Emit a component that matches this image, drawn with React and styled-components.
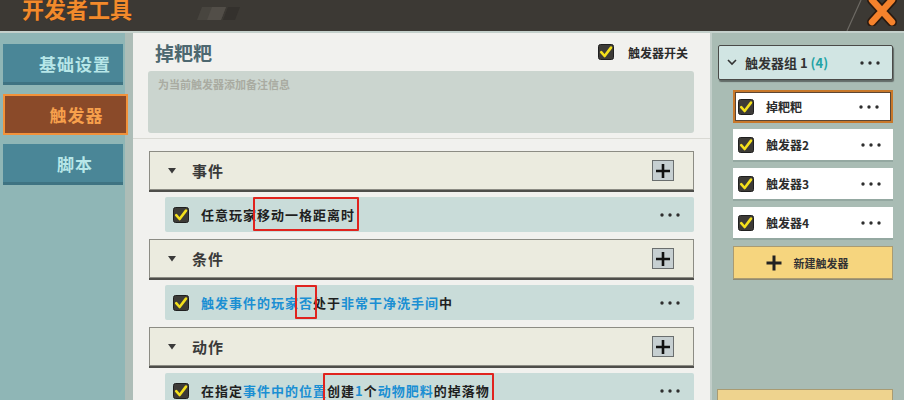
import React from "react";
import styled, { createGlobalStyle } from "styled-components";

const GlobalStyle = createGlobalStyle`
  html, body {
    margin: 0;
    padding: 0;
    background: #3c3934;
  }
  body {
    font-family: "Noto Sans CJK SC", "Noto Sans", sans-serif;
  }
`;

const FONT = `"Noto Sans CJK SC", "Noto Sans", sans-serif`;

function CheckBox() {
  return (
    <svg width="16" height="16" viewBox="0 0 16 16">
      <rect x="0.5" y="0.5" width="15" height="15" rx="2" fill="#3d3b37" stroke="#1f1f1f" />
      <path d="M3.2 8.2 L6.6 12 L13 3.6" fill="none" stroke="#f4e01c" strokeWidth="2.6" strokeLinecap="round" strokeLinejoin="round" />
    </svg>
  );
}

function Dots() {
  return (
    <svg width="20" height="4" viewBox="0 0 20 4">
      <circle cx="2" cy="2" r="1.7" fill="#2e2e2e" />
      <circle cx="10" cy="2" r="1.7" fill="#2e2e2e" />
      <circle cx="18" cy="2" r="1.7" fill="#2e2e2e" />
    </svg>
  );
}

const sections = [
  {
    title: "事件",
    parts: [
      { t: "任意玩家" },
      { t: "移动一格距离时", mark: true },
    ],
  },
  {
    title: "条件",
    parts: [
      { t: "触发事件的玩家", blue: true },
      { t: "否", blue: true, mark: true },
      { t: "处于" },
      { t: "非常干净洗手间", blue: true },
      { t: "中" },
    ],
  },
  {
    title: "动作",
    parts: [
      { t: "在指定" },
      { t: "事件中的位置", blue: true },
      {
        mark: true,
        nested: [
          { t: "创建" },
          { t: "1", blue: true },
          { t: "个" },
          { t: "动物肥料", blue: true },
          { t: "的掉落物" },
        ],
      },
    ],
  },
];

const triggers = [
  { id: 1, name: "掉粑粑", selected: true },
  { id: 2, name: "触发器2" },
  { id: 3, name: "触发器3" },
  { id: 4, name: "触发器4" },
];

function renderParts(parts) {
  return parts.map((p, i) => {
    if (p.nested) {
      return <Mark key={i}>{renderParts(p.nested)}</Mark>;
    }
    const word = <Word key={i} $blue={p.blue}>{p.t}</Word>;
    return p.mark ? <Mark key={i}>{word}</Mark> : word;
  });
}

export default function App() {
  return (
    <>
      <GlobalStyle />
      <Frame>
        <Header>
          <Caption>Mini World Developer Tools</Caption>
          <AppTitle>开发者工具</AppTitle>
          <Stripes width="60" height="31" viewBox="0 0 60 31">
            <polygon points="12,7 36,7 31,20 7,20" fill="#48453f" />
            <polygon points="22,7 36,7 31,20 17,20" fill="#524e48" />
            <polygon points="38,7 50,7 45,20 33,20" fill="#34312d" />
          </Stripes>
          <Spacer />
          <Slash width="20" height="31" viewBox="0 0 20 31">
            <line x1="17" y1="0" x2="3" y2="31" stroke="#6d6a64" strokeWidth="1.2" />
          </Slash>
          <Close width="32" height="28" viewBox="0 0 32 28">
            <g strokeLinecap="round">
              <path d="M6 2 L26 24 M26 2 L6 24" stroke="#2a1a10" strokeWidth="10" />
              <path d="M6 2 L26 24 M26 2 L6 24" stroke="#f5822c" strokeWidth="6.5" />
            </g>
          </Close>
        </Header>

        <Body>
          <Sidebar>
            <Tab>基础设置</Tab>
            <Tab $active>触发器</Tab>
            <Tab>脚本</Tab>
          </Sidebar>

          <Main>
            <InfoBlock>
              <TitleRow>
                <TriggerName>掉粑粑</TriggerName>
                <Switch>
                  <CheckBox />
                  <SwitchLabel>触发器开关</SwitchLabel>
                </Switch>
              </TitleRow>
              <Note>为当前触发器添加备注信息</Note>
            </InfoBlock>

            <SectionList>
              {sections.map((s) => (
                <Section key={s.title}>
                  <SectionHeader>
                    <svg width="8" height="6" viewBox="0 0 8 6">
                      <polygon points="0,0 8,0 4,5.5" fill="#3a3a3a" />
                    </svg>
                    <SectionTitle>{s.title}</SectionTitle>
                    <AddBox>
                      <svg width="16" height="16" viewBox="0 0 16 16">
                        <path d="M8 1 V15 M1 8 H15" stroke="#111" strokeWidth="2.6" />
                      </svg>
                    </AddBox>
                  </SectionHeader>
                  <Rule>
                    <CheckBox />
                    <RuleText>{renderParts(s.parts)}</RuleText>
                    <Dots />
                  </Rule>
                </Section>
              ))}
            </SectionList>
          </Main>

          <Panel>
            <GroupHeader>
              <svg width="10" height="7" viewBox="0 0 10 7">
                <polyline points="1,1 5,5 9,1" fill="none" stroke="#333" strokeWidth="1.6" />
              </svg>
              <GroupName>
                触发器组 1 <Count>(4)</Count>
              </GroupName>
              <Dots />
            </GroupHeader>
            <TriggerList>
              {triggers.map((t) => (
                <TriggerItem key={t.id} $selected={t.selected}>
                  <CheckBox />
                  <TriggerLabel>{t.name}</TriggerLabel>
                  <Dots />
                </TriggerItem>
              ))}
              <NewButton>
                <svg width="16" height="16" viewBox="0 0 16 16">
                  <path d="M8 0.5 V15.5 M0.5 8 H15.5" stroke="#222" strokeWidth="3" />
                </svg>
                <span>新建触发器</span>
              </NewButton>
            </TriggerList>
            <BottomBox />
          </Panel>
        </Body>
      </Frame>
    </>
  );
}

const Frame = styled.div`
  width: 904px;
  height: 400px;
  display: flex;
  flex-direction: column;
  overflow: hidden;
  font-family: ${FONT};
`;

const Header = styled.header`
  position: relative;
  height: 31px;
  flex-shrink: 0;
  display: flex;
  align-items: flex-start;
  background: #3c3934;
  border-bottom: 2px solid #c4d0cb;
  overflow: hidden;
`;

const Caption = styled.span`
  position: absolute;
  left: 2px;
  top: -9px;
  font-family: "Liberation Sans", sans-serif;
  font-size: 10px;
  color: #d0d0d0;
`;

const AppTitle = styled.h1`
  position: relative;
  margin: -7px 0 0 22px;
  font-size: 22px;
  font-weight: 700;
  line-height: 30px;
  color: #f28a2c;
  text-shadow: 0 0 1px #5a2a08;
`;

const Stripes = styled.svg`
  margin-left: 58px;
`;

const Spacer = styled.div`
  flex: 1;
`;

const Slash = styled.svg`
  margin-right: 2px;
`;

const Close = styled.svg`
  margin: -2px 6px 0 0;
`;

const Body = styled.div`
  flex: 1;
  display: flex;
  min-height: 0;
`;

const Sidebar = styled.nav`
  width: 133px;
  flex-shrink: 0;
  padding-top: 11px;
  display: flex;
  flex-direction: column;
  gap: 9px;
  background: linear-gradient(to right, #8fb6b6 125px, #adbdb7 125px);
`;

const Tab = styled.div`
  box-sizing: border-box;
  margin-left: 3px;
  width: ${(p) => (p.$active ? "125px" : "120px")};
  height: 41px;
  padding-left: ${(p) => (p.$active ? "22px" : "24px")};
  display: flex;
  align-items: center;
  justify-content: center;
  font-size: 17px;
  font-weight: 700;
  letter-spacing: 1px;
  color: ${(p) => (p.$active ? "#f7a04c" : "#b7e6e8")};
  background: ${(p) => (p.$active ? "#8a4a29" : "#4a8697")};
  border: ${(p) => (p.$active ? "2px solid #f2923a" : "none")};
  border-bottom: ${(p) => (p.$active ? "2px solid #f2923a" : "3px solid #3e7382")};
`;

const Main = styled.main`
  flex: 1;
  min-width: 0;
  display: flex;
  flex-direction: column;
  background: #f1f1ee;
`;

const InfoBlock = styled.div`
  padding: 0 16px 5px 15px;
  border-bottom: 1px solid #d9d9d3;
`;

const TitleRow = styled.div`
  height: 38px;
  display: flex;
  align-items: center;
  justify-content: space-between;
  padding: 0 6px 0 7px;
`;

const TriggerName = styled.h2`
  margin: 0;
  font-size: 19px;
  font-weight: 700;
  color: #4d6870;
`;

const Switch = styled.label`
  display: flex;
  align-items: center;
  gap: 14px;
`;

const SwitchLabel = styled.span`
  font-size: 12px;
  font-weight: 700;
  color: #2b2b2b;
`;

const Note = styled.div`
  height: 62px;
  box-sizing: border-box;
  padding: 5px 10px;
  border-radius: 3px;
  background: #cbd5cf;
  font-size: 11px;
  font-weight: 700;
  color: #a9aba1;
`;

const SectionList = styled.div`
  padding: 12px 16px 0 16px;
  display: flex;
  flex-direction: column;
  gap: 7px;
`;

const Section = styled.section`
  display: flex;
  flex-direction: column;
  gap: 7px;
`;

const SectionHeader = styled.div`
  height: 39px;
  box-sizing: border-box;
  display: flex;
  align-items: center;
  padding: 0 19px 0 18px;
  background: #ebebdf;
  border: 1px solid #8c8c84;
  box-shadow: 0 2px 0 #4e4e4a;
`;

const SectionTitle = styled.span`
  flex: 1;
  margin-left: 16px;
  font-size: 15px;
  font-weight: 700;
  letter-spacing: 1px;
  color: #3a3a3a;
`;

const AddBox = styled.div`
  width: 22px;
  height: 21px;
  box-sizing: border-box;
  display: flex;
  align-items: center;
  justify-content: center;
  background: #c6cfd1;
  border: 1px solid #6a6e6e;
`;

const Rule = styled.div`
  margin-left: 16px;
  height: 35px;
  box-sizing: border-box;
  display: flex;
  align-items: center;
  padding: 0 14px 0 8px;
  background: #c9dcd9;
  border-radius: 2px;
`;

const RuleText = styled.div`
  flex: 1;
  margin-left: 12px;
  font-size: 13px;
  font-weight: 700;
  letter-spacing: 1px;
  line-height: 18px;
  color: #1f1f1f;
  white-space: nowrap;
`;

const Word = styled.span`
  color: ${(p) => (p.$blue ? "#1b8fd3" : "#1f1f1f")};
`;

const Mark = styled.span`
  position: relative;
  &::after {
    content: "";
    position: absolute;
    top: -8px;
    bottom: -7px;
    left: -4px;
    right: -4px;
    border: 2px solid #e0231e;
    border-radius: 1px;
  }
`;

const Panel = styled.aside`
  width: 194px;
  flex-shrink: 0;
  box-sizing: border-box;
  padding: 12px 11px 0 6px;
  display: flex;
  flex-direction: column;
  background: #a9bcb4;
  border-left: 2px solid #c2cec9;
  overflow: hidden;

  & > * {
    flex-shrink: 0;
  }
`;

const GroupHeader = styled.div`
  height: 35px;
  box-sizing: border-box;
  display: flex;
  align-items: center;
  padding: 0 12px 0 8px;
  background: #d1e5e3;
  border: 1px solid #4a4a48;
  border-radius: 2px;
  box-shadow: 1px 2px 1px rgba(40, 40, 40, 0.55);
`;

const GroupName = styled.span`
  flex: 1;
  margin-left: 8px;
  font-size: 13px;
  font-weight: 700;
  color: #333;
`;

const Count = styled.span`
  color: #23a3a5;
`;

const TriggerList = styled.div`
  margin: 10px 0 0 15px;
  display: flex;
  flex-direction: column;
  gap: 6px;

  & > * {
    flex-shrink: 0;
  }
`;

const TriggerItem = styled.div`
  height: 33px;
  box-sizing: border-box;
  display: flex;
  align-items: center;
  padding: 0 12px 0 ${(p) => (p.$selected ? "3px" : "5px")};
  background: #ffffff;
  border: ${(p) => (p.$selected ? "2px solid #c8782a" : "none")};
  border-bottom: 2px solid ${(p) => (p.$selected ? "#c8782a" : "#94a8a1")};
  box-shadow: ${(p) => (p.$selected ? "inset 0 0 0 1px #5c4634" : "none")};
`;

const TriggerLabel = styled.span`
  flex: 1;
  margin-left: 12px;
  font-size: 12px;
  font-weight: 700;
  color: #2c2c2c;
`;

const NewButton = styled.div`
  height: 33px;
  box-sizing: border-box;
  display: flex;
  align-items: center;
  justify-content: center;
  gap: 12px;
  padding-right: 12px;
  background: #f6d57e;
  border: 1px solid #a99b72;
  box-shadow: 0 1px 0 #8e8a74;
  font-size: 11px;
  font-weight: 700;
  color: #333;
`;

const BottomBox = styled.div`
  margin: 110px 0 0 -1px;
  height: 40px;
  background: #eed38e;
  border: 1px solid #a99b72;
`;
